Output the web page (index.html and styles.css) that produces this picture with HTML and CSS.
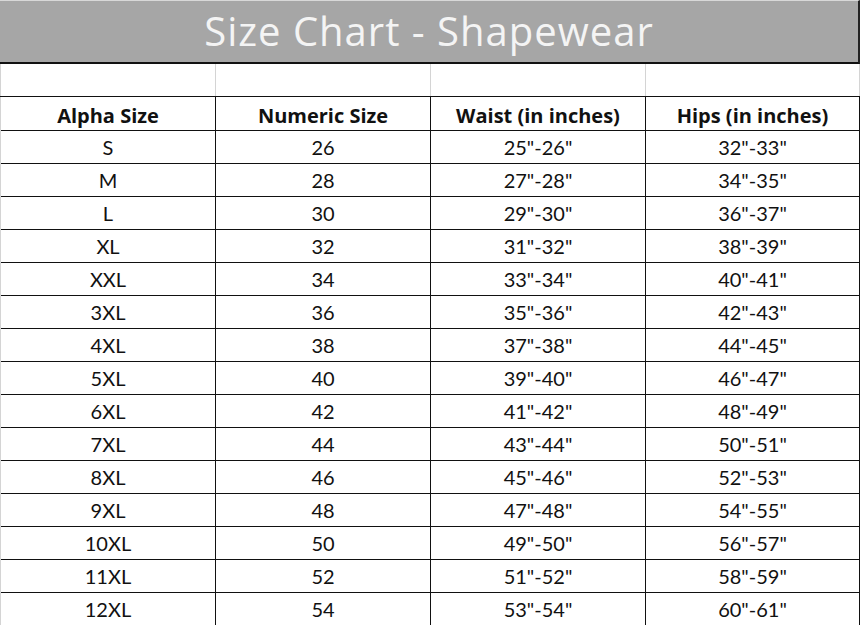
FILE: index.html
```html
<!DOCTYPE html>
<html>
<head>
<meta charset="utf-8">
<link rel="stylesheet" href="styles.css">
</head>
<body>
<div class="chart">
  <div class="title">Size Chart - Shapewear</div>
  <div class="row blank"><div class="cell"></div><div class="cell"></div><div class="cell"></div><div class="cell"></div></div>
  <div class="row head"><div class="cell">Alpha Size</div><div class="cell">Numeric Size</div><div class="cell">Waist (in inches)</div><div class="cell">Hips (in inches)</div></div>
  <div class="row"><div class="cell">S</div><div class="cell">26</div><div class="cell">25"-26"</div><div class="cell">32"-33"</div></div>
  <div class="row"><div class="cell">M</div><div class="cell">28</div><div class="cell">27"-28"</div><div class="cell">34"-35"</div></div>
  <div class="row"><div class="cell">L</div><div class="cell">30</div><div class="cell">29"-30"</div><div class="cell">36"-37"</div></div>
  <div class="row"><div class="cell">XL</div><div class="cell">32</div><div class="cell">31"-32"</div><div class="cell">38"-39"</div></div>
  <div class="row"><div class="cell">XXL</div><div class="cell">34</div><div class="cell">33"-34"</div><div class="cell">40"-41"</div></div>
  <div class="row"><div class="cell">3XL</div><div class="cell">36</div><div class="cell">35"-36"</div><div class="cell">42"-43"</div></div>
  <div class="row"><div class="cell">4XL</div><div class="cell">38</div><div class="cell">37"-38"</div><div class="cell">44"-45"</div></div>
  <div class="row"><div class="cell">5XL</div><div class="cell">40</div><div class="cell">39"-40"</div><div class="cell">46"-47"</div></div>
  <div class="row"><div class="cell">6XL</div><div class="cell">42</div><div class="cell">41"-42"</div><div class="cell">48"-49"</div></div>
  <div class="row"><div class="cell">7XL</div><div class="cell">44</div><div class="cell">43"-44"</div><div class="cell">50"-51"</div></div>
  <div class="row"><div class="cell">8XL</div><div class="cell">46</div><div class="cell">45"-46"</div><div class="cell">52"-53"</div></div>
  <div class="row"><div class="cell">9XL</div><div class="cell">48</div><div class="cell">47"-48"</div><div class="cell">54"-55"</div></div>
  <div class="row"><div class="cell">10XL</div><div class="cell">50</div><div class="cell">49"-50"</div><div class="cell">56"-57"</div></div>
  <div class="row"><div class="cell">11XL</div><div class="cell">52</div><div class="cell">51"-52"</div><div class="cell">58"-59"</div></div>
  <div class="row"><div class="cell">12XL</div><div class="cell">54</div><div class="cell">53"-54"</div><div class="cell">60"-61"</div></div>
</div>
</body>
</html>
```
FILE: styles.css
```css
html, body {
  margin: 0;
  padding: 0;
  background: #ffffff;
}
.chart {
  width: 860px;
  font-family: Lato, "Liberation Sans", sans-serif;
  color: #111111;
}
.title {
  box-sizing: border-box;
  height: 64px;
  background: #a6a6a6;
  border-top: 1px solid #d8d8d8;
  border-bottom: 2px solid #111111;
  border-right: 2px solid #222222;
  color: #f4f4f4;
  font-family: "Open Sans", Lato, sans-serif;
  font-size: 40px;
  letter-spacing: 1px;
  line-height: 60px;
  text-align: center;
}
.row {
  box-sizing: border-box;
  display: grid;
  grid-template-columns: 216px 215px 215px 214px;
  height: 33px;
  border-bottom: 1px solid #111111;
}
.cell {
  box-sizing: border-box;
  border-right: 1px solid #111111;
  text-align: center;
  font-size: 20px;
  line-height: 33px;
}
.cell:first-child {
  border-left: 1px solid #d4d4d4;
}
.blank {
  height: 33px;
}
.blank .cell {
  border-right-color: #d4d4d4;
}
.head {
  height: 34px;
}
.head .cell {
  font-family: "Open Sans", Lato, sans-serif;
  font-size: 20px;
  font-weight: bold;
  line-height: 33px;
  padding-top: 2px;
}
```
